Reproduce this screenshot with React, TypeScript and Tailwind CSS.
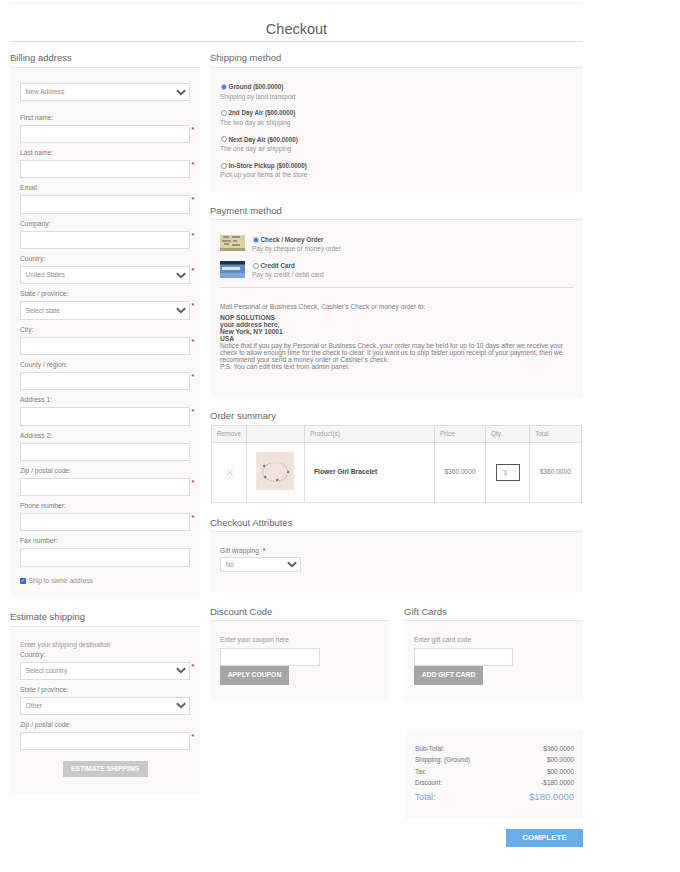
import React from "react";

const Chevron = () => (
  <svg width="10" height="7" viewBox="0 0 10 7" className="shrink-0">
    <polyline points="0.8,1.2 5,5.2 9.2,1.2" fill="none" stroke="#606060" strokeWidth="2" />
  </svg>
);

const Star = () => (
  <span className="absolute left-[171.5px] top-[0px] text-[7px] leading-[10px] font-bold text-[#b4475a]">*</span>
);

const Select = ({ value, className = "w-[170px] h-[18.3px]" }: { value: string; className?: string }) => (
  <div className={`${className} flex items-center justify-between pl-[4.5px] pr-[3.5px] bg-white border border-[#dddddd] text-[6.6px] text-[#929292]`}>
    <span>{value}</span>
    <Chevron />
  </div>
);

const Input = ({ w = "w-[170px]" }: { w?: string }) => (
  <input readOnly className={`${w} h-[18.3px] block bg-white border border-[#dddddd]`} />
);

const Field = ({ label, req, select }: { label: string; req?: boolean; select?: string }) => (
  <div>
    <div className="h-[17px] pt-[5px] text-[6.7px] leading-[10px] text-[#808080]">{label}</div>
    <div className="relative">
      {select ? <Select value={select} /> : <Input />}
      {req && <Star />}
    </div>
  </div>
);

const Heading = ({ children, className = "" }: { children: React.ReactNode; className?: string }) => (
  <h2 className={`text-[9.5px] leading-[14px] text-[#666666] border-b border-[#e6e6e6] ${className}`}>{children}</h2>
);

const Radio = ({ checked }: { checked?: boolean }) => (
  <input
    type="radio"
    readOnly
    checked={!!checked}
    className="appearance-none w-[6px] h-[6px] m-0 ml-[0.5px] rounded-full border-[0.5px] border-[#999999] bg-white checked:bg-[#3f7be6] checked:border-[#a9c5f2]"
  />
);

const Method = ({ name, desc, checked }: { name: string; desc: string; checked?: boolean }) => (
  <div className="h-[26.2px]">
    <div className="flex items-center h-[9px] gap-[2px]">
      <Radio checked={checked} />
      <span className="text-[6.3px] font-bold text-[#555555]">{name}</span>
    </div>
    <div className="text-[6.5px] leading-[9px] text-[#969696]">{desc}</div>
  </div>
);

const CheckThumb = () => (
  <svg width="25" height="16" viewBox="0 0 25 16" className="block">
    <rect width="25" height="16" fill="#dcd2a8" />
    <rect y="13" width="25" height="3" fill="#a8a078" />
    <path d="M3 2h6M12 2h8M2 6h9M13 6h4M4 9h5M12 10h8" stroke="#5c5a48" strokeWidth="1" />
  </svg>
);

const CardThumb = () => (
  <svg width="25" height="17" viewBox="0 0 25 17" className="block">
    <rect width="25" height="17" fill="#5f8ec8" />
    <rect y="0" width="25" height="3.5" fill="#1e2f50" />
    <rect x="2" y="6" width="18" height="3" fill="#dde6f0" />
    <rect y="12" width="25" height="5" fill="#7ea6d6" />
  </svg>
);

const Bracelet = () => (
  <svg width="38.5" height="38" viewBox="0 0 38 38" className="block">
    <rect width="38" height="38" fill="#f0e3d9" />
    <ellipse cx="19" cy="20" rx="12.5" ry="9.5" fill="none" stroke="#c5bdb2" strokeWidth="1.2" strokeDasharray="2 1" />
    <path d="M15 11c3-2 7-2 9 1" fill="none" stroke="#e9e6df" strokeWidth="2" />
    <circle cx="8" cy="14" r="1.2" fill="#77736c" />
    <circle cx="32" cy="20" r="1.2" fill="#77736c" />
    <circle cx="9" cy="25" r="1.2" fill="#77736c" />
    <circle cx="21" cy="28" r="1.2" fill="#77736c" />
  </svg>
);

const Th = ({ children, w }: { children?: React.ReactNode; w: string }) => (
  <th className={`${w} border border-[#dddddd] pl-[5px] text-left font-normal text-[6.5px] text-[#a0a0a0]`}>{children}</th>
);

const Total = ({ k, v }: { k: string; v: string }) => (
  <div className="flex justify-between h-[11.4px] text-[6.5px] leading-[11px] text-[#707070]">
    <span>{k}</span>
    <span>{v}</span>
  </div>
);

export default function App() {
  return (
    <div className="w-[680px] h-[872px] bg-white overflow-hidden font-['Liberation_Sans',Arial,sans-serif]">
      <div className="ml-[10px] w-[573px] pt-[3px]">
        <div className="h-[39px] border-y border-y-[#eeeeee] border-b-[#dcdcdc] text-center text-[14.5px] leading-[50px] text-[#5c5c5c]">
          Checkout
        </div>
        <div className="flex gap-[10px] pt-[6px]">
          <div className="w-[190px] shrink-0">
            <Heading className="h-[20px] pt-[3px]">Billing address</Heading>
            <div className="bg-[#faf8f8] px-[10px] pt-[15px] h-[529px]">
              <Select value="New Address" />
              <div className="mt-[6.6px]">
                <Field label="First name:" req />
                <Field label="Last name:" req />
                <Field label="Email:" req />
                <Field label="Company:" req />
                <Field label="Country:" req select="United States" />
                <Field label="State / province:" req select="Select state" />
                <Field label="City:" req />
                <Field label="County / region:" req />
                <Field label="Address 1:" req />
                <Field label="Address 2:" />
                <Field label="Zip / postal code:" req />
                <Field label="Phone number:" req />
                <Field label="Fax number:" />
              </div>
              <div className="flex items-center gap-[3px] mt-[9px] text-[6.7px] text-[#969696]">
                <span className="w-[5.5px] h-[5.5px] bg-[#3a66cc] rounded-[1px] flex items-center justify-center">
                  <svg width="5" height="5" viewBox="0 0 5 5">
                    <path d="M1 2.5l1 1 2-2.2" fill="none" stroke="#ffffff" strokeWidth="0.8" />
                  </svg>
                </span>
                Ship to same address
              </div>
            </div>

            <Heading className="mt-[9.5px] h-[20px] pt-[3px]">Estimate shipping</Heading>
            <div className="bg-[#faf8f8] px-[10px] pt-[13px] h-[166px]">
              <div className="text-[6.6px] leading-[9px] text-[#969696]">Enter your shipping destination</div>
              <div className="mt-[-4px]">
                <Field label="Country:" req select="Select country" />
                <Field label="State / province:" select="Other" />
                <Field label="Zip / postal code:" req />
              </div>
              <div className="mx-auto mt-[10.5px] w-[85px] h-[16px] bg-[#c9c9c9] text-white text-[6.8px] font-bold leading-[16px] text-center">
                ESTIMATE SHIPPING
              </div>
            </div>
          </div>

          <div className="w-[373px] shrink-0">
            <Heading className="h-[20px] pt-[3px]">Shipping method</Heading>
            <div className="bg-[#faf8f8] px-[10px] pt-[14.5px] h-[124px]">
              <Method name="Ground ($00.0000)" desc="Shipping by land transport" checked />
              <Method name="2nd Day Air ($00.0000)" desc="The two day air shipping" />
              <Method name="Next Day Air ($00.0000)" desc="The one day air shipping" />
              <Method name="In-Store Pickup ($00.0000)" desc="Pick up your items at the store" />
            </div>

            <Heading className="mt-[8px] h-[20px] pt-[4px]">Payment method</Heading>
            <div className="bg-[#faf8f8] px-[10px] pt-[15px] h-[177px]">
              <div className="flex gap-[7px] h-[26px]">
                <CheckThumb />
                <div>
                  <div className="flex items-center h-[9px] gap-[2px]">
                    <Radio checked />
                    <span className="text-[6.3px] font-bold text-[#555555]">Check / Money Order</span>
                  </div>
                  <div className="text-[6.5px] leading-[9px] text-[#969696]">Pay by cheque or money order</div>
                </div>
              </div>
              <div className="flex gap-[7px] h-[26px]">
                <CardThumb />
                <div>
                  <div className="flex items-center h-[9px] gap-[2px]">
                    <Radio />
                    <span className="text-[6.3px] font-bold text-[#555555]">Credit Card</span>
                  </div>
                  <div className="text-[6.5px] leading-[9px] text-[#969696]">Pay by credit / debit card</div>
                </div>
              </div>
              <div className="border-t border-[#dddddd] pt-[15.5px] text-[6.65px] leading-[6.9px] text-[#808080]">
                <p>Mail Personal or Business Check, Cashier's Check or money order to:</p>
                <p className="mt-[5px] font-bold text-[#555555]">
                  NOP SOLUTIONS
                  <br />
                  your address here,
                  <br />
                  New York, NY 10001
                  <br />
                  USA
                </p>
                <p>
                  Notice that if you pay by Personal or Business Check, your order may be held for up to 10 days after we receive your
                  check to allow enough time for the check to clear. If you want us to ship faster upon receipt of your payment, then we
                  recommend your send a money order or Cashier's check.
                  <br />
                  P.S. You can edit this text from admin panel.
                </p>
              </div>
            </div>

            <Heading className="mt-[9px] border-b-0 h-[18.5px] pt-[3px]">Order summary</Heading>
            <table className="ml-[1px] w-[369.5px] table-fixed border-collapse">
              <thead>
                <tr className="h-[17.5px] bg-[#f6f5f5]">
                  <Th w="w-[35px]">Remove</Th>
                  <Th w="w-[58px]" />
                  <Th w="w-[130px]">Product(s)</Th>
                  <Th w="w-[51px]">Price</Th>
                  <Th w="w-[44px]">Qty.</Th>
                  <Th w="w-[51.5px]">Total</Th>
                </tr>
              </thead>
              <tbody>
                <tr className="h-[59.5px] text-[6.6px] text-[#808080]">
                  <td className="border border-[#dddddd] text-center">
                    <svg width="7" height="7" viewBox="0 0 7 7" className="mx-auto">
                      <path d="M.5.5l6 6M6.5.5l-6 6" stroke="#b5b5b5" strokeWidth="0.7" />
                    </svg>
                  </td>
                  <td className="border border-[#dddddd]">
                    <div className="flex justify-center mb-[2px]">
                      <Bracelet />
                    </div>
                  </td>
                  <td className="border border-[#dddddd] pl-[9px] text-[6.7px] font-bold text-[#444444]">Flower Girl Bracelet</td>
                  <td className="border border-[#dddddd] text-center">$360.0000</td>
                  <td className="border border-[#dddddd]">
                    <div className="mx-auto w-[24px] h-[17px] border border-[#555555] pl-[7px] text-[6.5px] leading-[15px] text-[#888888]">1</div>
                  </td>
                  <td className="border border-[#dddddd] text-center">$360.0000</td>
                </tr>
              </tbody>
            </table>

            <Heading className="mt-[10px] h-[19.5px] pt-[3px]">Checkout Attributes</Heading>
            <div className="bg-[#faf8f8] px-[10px] pt-[14px] h-[60px]">
              <div className="text-[6.6px] leading-[9px] text-[#808080]">
                Gift wrapping <span className="ml-[2px] font-bold text-[#b4475a]">*</span>
              </div>
              <div className="mt-[2px]">
                <Select value="No" className="w-[81px] h-[15px]" />
              </div>
            </div>

            <div className="flex gap-[15px] mt-[10px]">
              <div className="w-[179px]">
                <Heading className="h-[19px] pt-[3px]">Discount Code</Heading>
                <div className="bg-[#faf8f8] px-[10px] pt-[13.5px] h-[79px]">
                  <div className="text-[6.6px] leading-[9px] text-[#969696]">Enter your coupon here</div>
                  <Input w="w-[100px] mt-[4px]" />
                  <div className="mt-[0.5px] w-[69px] h-[19px] bg-[#a6a6a6] text-white text-[6.8px] font-bold leading-[18px] text-center">APPLY COUPON</div>
                </div>
              </div>
              <div className="w-[179px]">
                <Heading className="h-[19px] pt-[3px]">Gift Cards</Heading>
                <div className="bg-[#faf8f8] px-[10px] pt-[13.5px] h-[79px]">
                  <div className="text-[6.6px] leading-[9px] text-[#969696]">Enter gift card code</div>
                  <Input w="w-[99px] mt-[4px]" />
                  <div className="mt-[0.5px] w-[69px] h-[19px] bg-[#a6a6a6] text-white text-[6.8px] font-bold leading-[18px] text-center">ADD GIFT CARD</div>
                </div>
              </div>
            </div>

            <div className="ml-[196px] mt-[29.5px] h-[89px] bg-[#faf8f8] px-[9px] pt-[13.5px]">
              <Total k="Sub-Total:" v="$360.0000" />
              <Total k="Shipping: (Ground)" v="$00.0000" />
              <Total k="Tax:" v="$00.0000" />
              <Total k="Discount:" v="-$180.0000" />
              <div className="flex justify-between text-[#7aaae2] leading-[14px] mt-[1px]">
                <span className="text-[8.5px]">Total:</span>
                <span className="text-[9.5px]">$180.0000</span>
              </div>
            </div>
            <div className="ml-[296px] mt-[10px] h-[18px] bg-[#68aeea] text-white text-[8px] font-bold leading-[17px] text-center">COMPLETE</div>
          </div>
        </div>
      </div>
    </div>
  );
}
